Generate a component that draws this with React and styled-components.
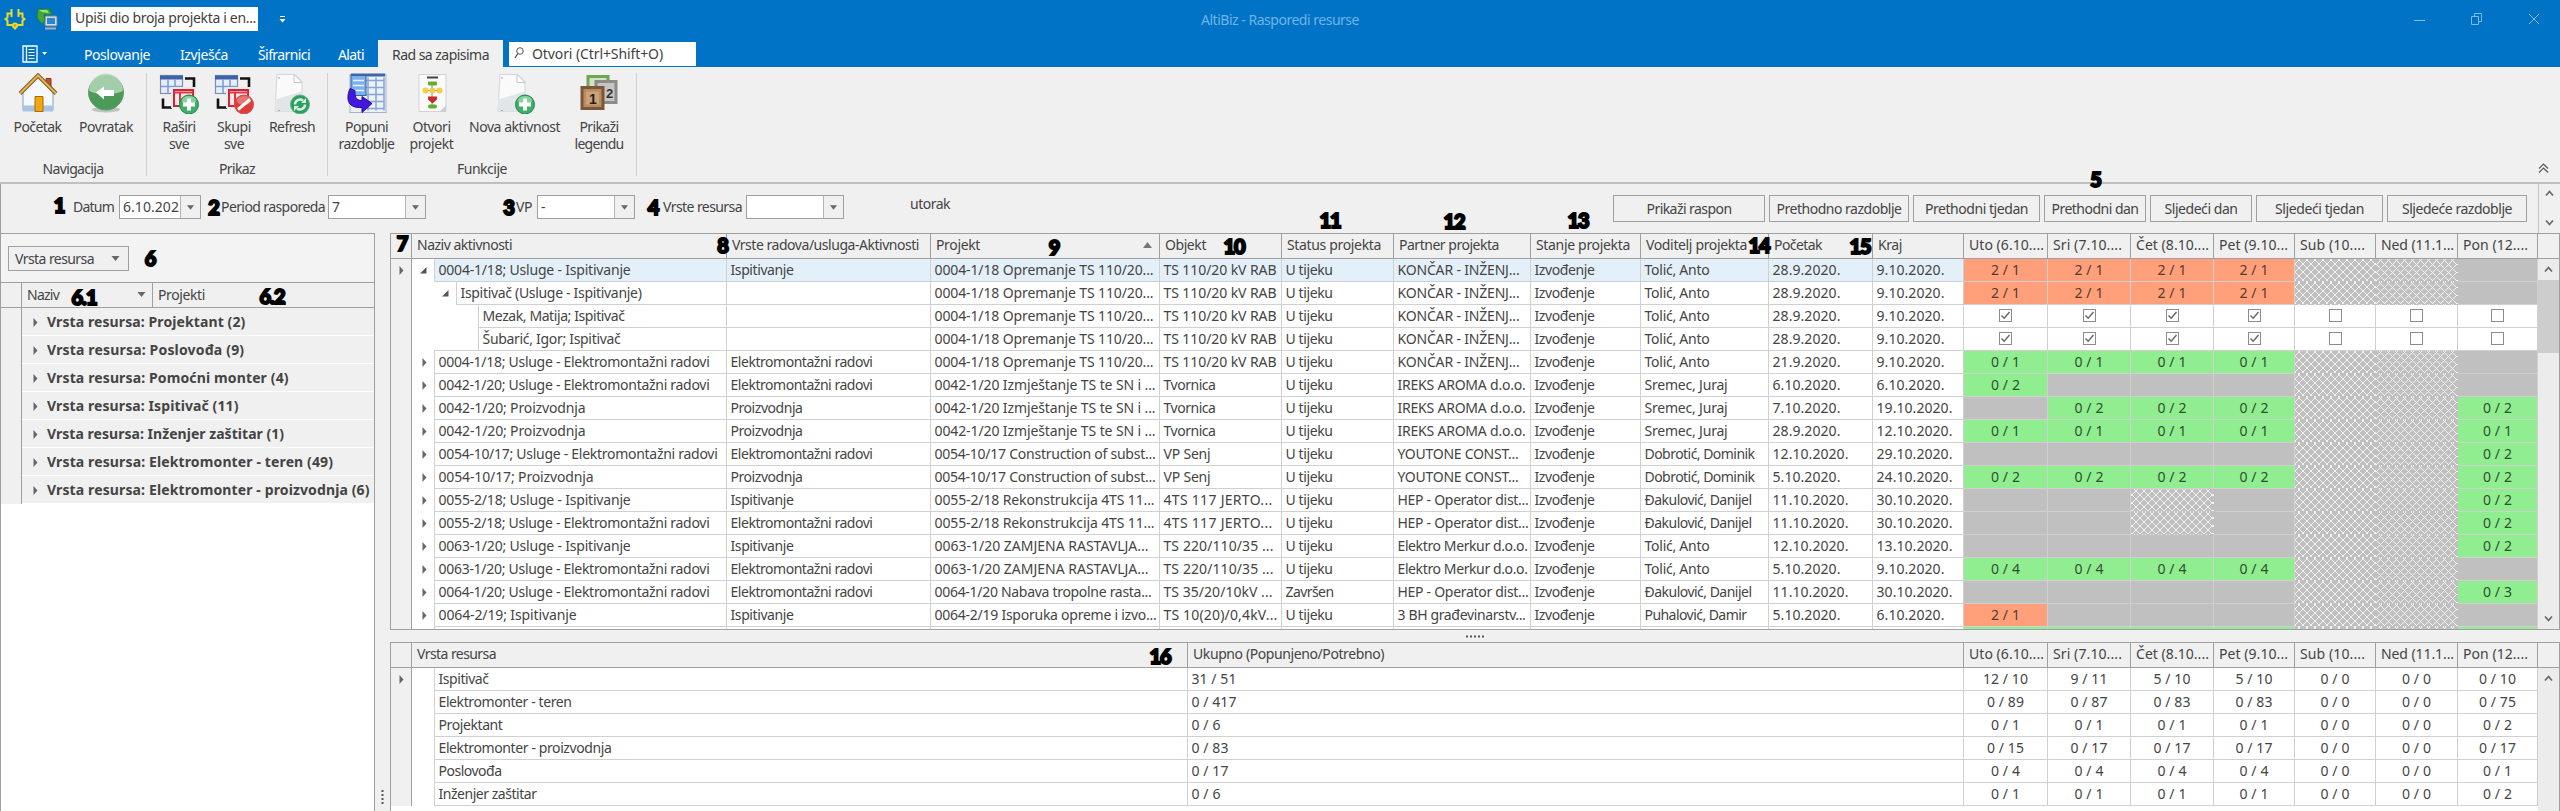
import React from "react";
import styled, { createGlobalStyle, css } from "styled-components";

const LINE = "#a0a0a0";
const SOFT = "#d0d0d0";
const FACE = "#f0f0f0";

const Global = createGlobalStyle`
  * { box-sizing: border-box; }
  html, body { margin: 0; padding: 0; background: ${FACE}; }
  body { overflow: hidden; }
`;

/* ---------- text with compact interface metrics ---------- */

const ADVANCE = {
  " ": 0.313, "(": 0.383, ")": 0.383, "-": 0.363, ".": 0.303, ",": 0.303, "/": 0.382, ":": 0.354, ";": 0.354, "+": 0.728,
  A: 0.6, B: 0.589, C: 0.601, D: 0.678, E: 0.561, F: 0.521, G: 0.667, H: 0.675, I: 0.373, J: 0.417, K: 0.588, L: 0.498,
  M: 0.771, N: 0.667, O: 0.708, P: 0.551, Q: 0.708, R: 0.621, S: 0.557, T: 0.584, U: 0.656, V: 0.597, W: 0.902, X: 0.581,
  Y: 0.576, Z: 0.559, a: 0.525, b: 0.553, c: 0.461, d: 0.553, e: 0.526, f: 0.318, g: 0.553, h: 0.558, i: 0.229, j: 0.282,
  k: 0.498, l: 0.229, m: 0.84, n: 0.558, o: 0.543, p: 0.553, q: 0.553, r: 0.36, s: 0.446, t: 0.334, u: 0.558, v: 0.498,
  w: 0.742, x: 0.495, y: 0.498, z: 0.444, "đ": 0.553, "Đ": 0.678,
};
const FAMILY = '"Noto Sans", "Open Sans", sans-serif';
const ruler = document.createElement("canvas").getContext("2d");

function tracking(text, bold) {
  let target = 0;
  for (const ch of text) {
    const base = ADVANCE[ch] ? ch : ch.normalize("NFD")[0];
    target += Math.round((ADVANCE[base] || 0.546) * 14);
  }
  if (bold) target *= 1.14;
  ruler.font = `${bold ? 700 : 400} 14px "Noto Sans"`;
  return (target - ruler.measureText(text).width) / text.length;
}

const Run = styled.span`
  white-space: pre;
  font-weight: ${(p) => (p.$bold ? 700 : 400)};
`;
const Txt = ({ children, bold }) => (
  <Run $bold={bold} style={{ letterSpacing: `${tracking(children, bold).toFixed(3)}px` }}>{children}</Run>
);

/* ---------- frame ---------- */

const Window = styled.div`
  position: relative;
  width: 2560px;
  height: 811px;
  overflow: hidden;
  display: flex;
  flex-direction: column;
  background: ${FACE};
  color: #444;
  font: 14px/18px ${FAMILY};
  svg { display: block; flex: none; }
`;

const TitleBar = styled.header`
  height: 40px;
  flex: none;
  background: #0173c7;
  display: flex;
  align-items: center;
  padding: 0 20px 2px 4px;
  color: #6fb4e6;
`;
const QuickBox = styled.div`
  width: 187px;
  height: 24px;
  margin: 0 21px 0 13px;
  padding: 2px 4px;
  background: #fff;
  color: #3f3f3f;
`;
const WindowTitle = styled.div`
  margin: 2px auto 0 915px;
`;
const WindowButtons = styled.div`
  display: flex;
  align-items: center;
  gap: 45px;
`;

const TabBar = styled.nav`
  height: 27px;
  flex: none;
  background: #0173c7;
  display: flex;
  align-items: stretch;
  color: #fff;
`;
const FileTab = styled.div`
  width: 70px;
  padding: 5px 0 0 22px;
  display: flex;
  gap: 4px;
`;
const Tab = styled.div`
  width: ${(p) => p.$w}px;
  padding-top: 6px;
  text-align: center;
  ${(p) => p.$active && css`background: ${FACE}; color: #3f3f3f;`}
`;
const SearchBox = styled.div`
  width: 187px;
  height: 24px;
  margin: 2px 0 0 6px;
  padding: 3px 5px;
  background: #fff;
  color: #3f3f3f;
  display: flex;
  gap: 8px;
`;

const Ribbon = styled.section`
  height: 117px;
  flex: none;
  display: flex;
  padding: 6px 0 0;
  border-bottom: 2px solid #bfbfbf;
`;
const Group = styled.div`
  width: ${(p) => p.$w}px;
  height: 103px;
  display: flex;
  flex-direction: column;
  align-items: center;
  border-right: 1px solid ${SOFT};
`;
const Tools = styled.div`
  height: 88px;
  display: flex;
  justify-content: center;
`;
const Tool = styled.div`
  width: ${(p) => p.$w}px;
  display: flex;
  flex-direction: column;
  align-items: center;
  line-height: 17px;
  & > svg { margin-bottom: 4px; }
`;
const Caption = styled.div`
  height: 18px;
  padding-top: 1px;
  line-height: 20px;
  flex: none;
`;
const Collapse = styled.div`
  margin: 90px 11px 0 auto;
`;

/* ---------- filter bar ---------- */

const FilterBar = styled.section`
  height: 49px;
  flex: none;
  display: flex;
  border-left: 1px solid ${LINE};
  padding-left: 72px;
`;
const Field = styled.label`
  display: flex;
  height: 24px;
  margin: 11px ${(p) => p.$after}px 0 0;
`;
const FieldLabel = styled.span`
  width: ${(p) => p.$w}px;
  padding-top: 3px;
`;
const Combo = styled.span`
  width: ${(p) => p.$w}px;
  display: flex;
  justify-content: space-between;
  border: 1px solid ${LINE};
  background: #fff;
`;
const ComboText = styled.span`
  flex: 1;
  min-width: 0;
  overflow: hidden;
  padding: 2px 0 0 3px;
`;
const ComboArrow = styled.span`
  width: 20px;
  flex: none;
  display: grid;
  place-items: center;
  border-left: 1px solid #b5b5b5;
  background: ${FACE};
`;
const DayName = styled.div`
  padding-top: 11px;
`;
const NavButtons = styled.div`
  display: flex;
  gap: 4px;
  margin: 11px 11px 0 auto;
`;
const NavButton = styled.div`
  width: ${(p) => p.$w}px;
  height: 27px;
  border: 1px solid ${LINE};
  text-align: center;
  line-height: 26px;
`;
const MiniScroll = styled.div`
  width: 22px;
  border-left: 1px solid #c4c4c4;
  display: flex;
  flex-direction: column;
  justify-content: space-between;
  align-items: center;
  padding: 6px 0 7px;
`;

/* ---------- workspace ---------- */

const Workspace = styled.main`
  flex: 1;
  min-height: 0;
  display: flex;
`;
const Side = styled.aside`
  width: 375px;
  flex: none;
  border: 1px solid ${LINE};
  border-bottom: 0;
  background: #fff;
`;
const SideTop = styled.div`
  height: 48px;
  padding: 12px 7px;
  background: #f3f3f3;
`;
const GroupBy = styled.div`
  width: 121px;
  height: 25px;
  border: 1px solid ${LINE};
  background: ${FACE};
  display: flex;
  align-items: center;
  justify-content: space-between;
  padding: 0 8px 0 6px;
`;
const SideHead = styled.div`
  height: 26px;
  display: grid;
  grid-template-columns: 21px 131px 1fr;
  border: solid ${LINE};
  border-width: 1px 0;
  background: ${FACE};
`;
const SideHeadCell = styled.div`
  display: flex;
  align-items: center;
  justify-content: space-between;
  padding: 0 6px 1px 5px;
  border-right: 1px solid ${LINE};
  &:last-child { border-right: 0; }
`;
const SideRow = styled.div`
  height: 28px;
  display: grid;
  grid-template-columns: 21px 1fr;
  background: ${FACE};
`;
const Gutter = styled.div`
  border-right: 1px solid ${LINE};
`;
const SideGroup = styled.div`
  display: flex;
  align-items: center;
  gap: 9px;
  padding: 1px 0 0 11px;
  border-bottom: 1px solid #fff;
`;
const VSplitter = styled.div`
  width: 15px;
  flex: none;
  display: flex;
  flex-direction: column;
  justify-content: flex-end;
  align-items: center;
  padding-bottom: 7px;
`;
const Grids = styled.div`
  flex: 1;
  min-width: 0;
  display: flex;
  flex-direction: column;
`;
const HSplitter = styled.div`
  height: 12px;
  flex: none;
  display: grid;
  place-items: center;
`;

const GridBox = styled.section`
  ${(p) => (p.$h ? css`height: ${p.$h}px; border-bottom: 1px solid ${LINE};` : css`flex: 1;`)}
  min-height: 0;
  overflow: hidden;
  border-top: 1px solid ${LINE};
  border-left: 1px solid ${LINE};
  background: #fff;
  display: flex;
`;
const GridTable = styled.div`
  width: 2147px;
  flex: none;
`;
const GridRow = styled.div`
  display: grid;
  grid-template-columns: ${(p) => p.$cols};
  height: ${(p) => (p.$head ? 25 : 23)}px;
  ${(p) => p.$head && css`background: ${FACE}; border-bottom: 1px solid ${LINE};`}
`;
const HeadCell = styled.div`
  display: flex;
  align-items: center;
  justify-content: space-between;
  overflow: hidden;
  padding: 0 7px 2px 5px;
  border-right: 1px solid ${LINE};
`;
const Marker = styled.div`
  display: grid;
  place-items: center;
  background: ${FACE};
  border-right: 1px solid ${LINE};
`;
const Cell = styled.div`
  overflow: hidden;
  padding: 2px 0 0 3.5px;
  border-right: 1px solid ${SOFT};
  border-bottom: 1px solid ${SOFT};
  background: ${(p) => (p.$selected ? "#e4f0f9" : "#fff")};
`;
const TreeCell = styled.div`
  display: flex;
  min-width: 0;
`;
const Twig = styled.div`
  width: ${(p) => 22 + p.$level * 22}px;
  flex: none;
  display: flex;
  align-items: center;
  justify-content: flex-end;
  padding-right: 7px;
  ${(p) => p.$closing && css`background: linear-gradient(${SOFT}, ${SOFT}) 22px 100% / 100% 1px no-repeat;`}
`;
const TreeText = styled(Cell)`
  flex: 1;
  border-left: 1px solid ${SOFT};
`;

const hatch = css`
  background:
    repeating-linear-gradient(45deg, rgba(255,255,255,.8) 0 1.2px, transparent 1.2px 5.657px),
    repeating-linear-gradient(-45deg, rgba(255,255,255,.8) 0 1.2px, transparent 1.2px 5.657px),
    #c0c0c0;
  border-color: transparent;
`;
const fills = {
  o: css`background: #ffa07a; color: #5a3a2e;`,
  g: css`background: #90ee90; color: #2f4f2f;`,
  x: css`background: #c0c0c0;`,
  h: hatch,
  w: css`background: #fff;`,
};
const DayCell = styled.div`
  display: flex;
  justify-content: center;
  align-items: center;
  padding-bottom: 1px;
  border-right: 1px solid ${SOFT};
  border-bottom: 1px solid ${SOFT};
  ${(p) => fills[p.$fill]}
`;
const Check = styled.span`
  width: 13px;
  height: 13px;
  border: 1px solid #8c8c8c;
  background: #fff;
  display: grid;
  place-items: center;
`;

const ScrollColumn = styled.div`
  flex: 1;
  display: flex;
  flex-direction: column;
  align-items: center;
  background: #ececec;
  border-right: 1px solid ${LINE};
`;
const ScrollHead = styled.div`
  align-self: stretch;
  height: 25px;
  flex: none;
  background: ${FACE};
  border-bottom: 1px solid ${LINE};
`;
const ScrollArrow = styled.div`
  height: 21px;
  flex: none;
  display: grid;
  place-items: center;
`;
const Thumb = styled.div`
  align-self: stretch;
  height: 73px;
  background: #cdcdcd;
  margin-bottom: auto;
`;

/* numbered callouts drawn over the window */
const Callout = styled.b`
  position: absolute;
  left: ${(p) => p.$x}px;
  top: ${(p) => p.$y}px;
  transform: translate(-50%, -50%);
  font: 900 20px/20px Lato, "Open Sans", sans-serif;
  letter-spacing: -1px;
  color: #000;
  -webkit-text-stroke: 2px #000;
`;

/* ---------- small glyphs ---------- */

const Down = ({ w = 8, color = "#666" }) => (
  <svg width={w} height="5" viewBox="0 0 8 5"><path d="M0 0h8L4 5z" fill={color} /></svg>
);
const Up = () => <svg width="9" height="6" viewBox="0 0 9 6"><path d="M0 6h9L4.500 0z" fill="#777" /></svg>;
const Right = () => <svg width="5" height="9" viewBox="0 0 5 9"><path d="M.5 0L4.500 4.500.5 9z" fill="#666" /></svg>;
const Open = () => <svg width="7" height="7" viewBox="0 0 7 7"><path d="M6.500 0v6.500H0z" fill="#555" /></svg>;
const Chevron = ({ down }) => (
  <svg width="9" height="7" viewBox="0 0 9 7">
    <path d={down ? "M1 1.500L4.500 5.500 8 1.500" : "M1 5.500L4.500 1.500 8 5.500"} fill="none" stroke="#6a6a6a" strokeWidth="1.800" />
  </svg>
);
const Tick = () => (
  <svg width="11" height="11" viewBox="0 0 11 11"><path d="M1.500 5.500L4.200 8.300 9.500 2" fill="none" stroke="#666" strokeWidth="1.400" /></svg>
);
const DotsH = () => <svg width="18" height="3"><path d="M0 1.500h18" stroke="#555" strokeWidth="2" strokeDasharray="2 2" /></svg>;
const DotsV = () => <svg width="3" height="14"><path d="M1.500 0v14" stroke="#555" strokeWidth="2" strokeDasharray="2 2" /></svg>;

const Logo = () => (
  <svg width="22" height="22" viewBox="0 0 22 22" fill="none" stroke="#e6dc2c" strokeWidth="2">
    <path d="M7.500 5.500H3.500V9.500L1.500 11l2 1.500V17h5M14.500 5.500h4V9.500l2 1.500-2 1.500V17h-5M7.500 1v8M14.500 1v8" />
    <circle cx="11" cy="17.500" r="2.200" fill="#b5ad10" strokeWidth="1.800" />
    <path d="M11 19.500v2" />
  </svg>
);
const Exchange = () => (
  <svg width="22" height="22" viewBox="0 0 22 22">
    <rect x="9" y="8" width="12" height="10" rx="1" fill="#c9dce9" stroke="#74818c" />
    <rect x="11" y="10" width="8" height="6" fill="#2c86cf" />
    <path d="M9 20.500h11" stroke="#a9b0b5" strokeWidth="2" />
    <path d="M2 1h11l3 5-4 1-4-1 1 6-3 4-5-6z" fill="#43a638" stroke="#237a25" strokeWidth=".8" />
    <path d="M3 2h8l2 3-7-1z" fill="#9ae082" />
  </svg>
);

const Plus = () => (
  <g>
    <circle cx="30" cy="31" r="9.500" fill="#3fae68" stroke="#22864a" />
    <ellipse cx="30" cy="27" rx="7" ry="4.500" fill="#a5dfb6" opacity=".7" />
    <path d="M28 25h4v4h4v4h-4v4h-4v-4h-4v-4h4z" fill="#fff" />
  </g>
);
const Page = () => (
  <g>
    <path d="M5 1h18l7 7v30H3z" fill="#fafafa" stroke="#d3d6da" />
    <path d="M3 26l27-8v20H3z" fill="#e3e6e9" />
    <path d="M22 1v8h8z" fill="#fff" stroke="#c3c7cc" />
    <path d="M6 4.500h2M6 37h2" stroke="#9aa" />
  </g>
);
const Tables = () => (
  <g>
    <path d="M26 5h9v10M4 25v9h9" fill="none" stroke="#111" strokeWidth="2.600" />
    <rect x="1.500" y="2" width="22" height="18" fill="#e6eefb" stroke="#7f90ad" strokeWidth="1.200" />
    <path d="M1 4h23" stroke="#3d63a8" strokeWidth="4" />
    <path d="M9 6v14M16 6v7M2 13h21" stroke="#7b9bd4" strokeWidth="1.500" />
    <rect x="14" y="15.500" width="21" height="17" fill="#fbe9ea" stroke="#e8e8e8" strokeWidth="4" />
    <rect x="15" y="16.500" width="19" height="16" fill="#fbe9ea" stroke="#cf2637" strokeWidth="2" />
    <path d="M15 19h19M21 19v12" stroke="#dd3849" strokeWidth="2" />
  </g>
);
const icons = {
  home: (
    <g>
      <path d="M28 5h5v12h-5z" fill="#c4502c" stroke="#8c3420" />
      <path d="M5 18L20 3l15 15v19H5z" fill="#f5f8fd" stroke="#8aa0bd" />
      <path d="M5 32h30v6H5z" fill="#a9c4e5" />
      <path d="M2 20L20 2l18 18" fill="none" stroke="#80561a" strokeWidth="4" />
      <path d="M2 20L20 2l18 18" fill="none" stroke="#e3b759" strokeWidth="2" />
      <path d="M17 23h8v15h-8z" fill="#f2a70c" stroke="#a66a0a" />
    </g>
  ),
  back: (
    <g>
      <ellipse cx="20" cy="36" rx="14" ry="3" fill="#bcc6bc" />
      <circle cx="20" cy="19" r="17.500" fill="#4b9a58" stroke="#5f9e69" />
      <path d="M3 17a17 17 0 0134 0c-6 5-28 5-34 0z" fill="#c0dfc4" opacity=".75" />
      <path d="M10 19l8-6v3.500h10v6H18V26z" fill="#fff" />
    </g>
  ),
  expand: <g><Tables /><Plus /></g>,
  shrink: (
    <g>
      <Tables />
      <circle cx="30" cy="31" r="9.500" fill="#df3c38" stroke="#d05050" />
      <ellipse cx="30" cy="27" rx="7" ry="4.500" fill="#f39a92" opacity=".6" />
      <path d="M24 36l12-10" stroke="#fff" strokeWidth="3" />
    </g>
  ),
  refresh: (
    <g>
      <Page />
      <circle cx="28" cy="31" r="9.500" fill="#2f9d62" stroke="#5cb585" />
      <path d="M23 31a5 5 0 018-4M33 31a5 5 0 01-8 4" fill="none" stroke="#d5f5dc" strokeWidth="2.500" />
      <path d="M29 29.500h5v-5zM27 32.500h-5v5z" fill="#d5f5dc" />
    </g>
  ),
  fill: (
    <g>
      <rect x="3" y="1" width="36" height="38" fill="#e9f1fb" stroke="#a5b2c8" />
      <path d="M4 1.500h34" stroke="#3f66a5" strokeWidth="3" />
      <path d="M18 7h19M18 14h19M18 21h19M18 28h19M18 35h19M21 4v33M29 4v33M37 4v33" stroke="#8aa3cf" strokeWidth="1.500" />
      <rect x="4" y="2" width="15" height="20" fill="#7cb0ea" stroke="#36669f" />
      <path d="M6 7h11M6 12h11M6 17h11" stroke="#e8f3ff" strokeWidth="1.500" />
      <path d="M3 15c-5 12-1 20 12 19v5l10-9-10-7v4C8 27 8 22 8 17z" fill="#4318dd" stroke="#2a0a9c" />
    </g>
  ),
  project: (
    <g>
      <path d="M7 1h27v37H7z" fill="#fafafa" stroke="#d1d3d4" />
      <path d="M28 38l6-6v6z" fill="#c9ccce" />
      <path d="M15 4h11" stroke="#444" strokeWidth="2" />
      <path d="M20 10v23M13 17h15" stroke="#888" />
      <rect x="16" y="8" width="9" height="4" rx="1" fill="#65ad30" />
      <circle cx="13.500" cy="17" r="3" fill="#f1cf48" /><circle cx="20.500" cy="17" r="3" fill="#f1cf48" /><circle cx="27.500" cy="17" r="3" fill="#f1cf48" />
      <path d="M16 23h9v3l-4.500 4-4.500-4z" fill="#cc2a28" />
      <rect x="16" y="31" width="9" height="4" rx="2" fill="#65ad30" />
    </g>
  ),
  add: <g><Page /><Plus /></g>,
  legend: (
    <g>
      <path d="M9 3h20v20H9z" fill="#cde5c1" stroke="#6fa558" strokeWidth="3" />
      <path d="M17 8h20v21H17z" fill="#c5c5c1" stroke="#8c8c87" strokeWidth="3" />
      <path d="M3 14h21v21H3z" fill="#b98b60" stroke="#7b5638" strokeWidth="3" />
      <path d="M7 18h13v13H7z" fill="#cda27a" />
      <text x="10" y="30" fontFamily="Liberation Sans" fontSize="14" fontWeight="700" fill="#222">1</text>
      <text x="27" y="24" fontFamily="Liberation Sans" fontSize="13" fontWeight="700" fill="#333">2</text>
    </g>
  ),
};
const ToolButton = ({ icon, w, lines }) => (
  <Tool $w={w}>
    <svg width="40" height="41" viewBox="0 0 40 40">{icons[icon]}</svg>
    {lines.map((l) => <Txt key={l}>{l}</Txt>)}
  </Tool>
);

/* ---------- data ---------- */

const groups = [
  { name: "Navigacija", w: 147, tools: [["home", 66, ["Početak"]], ["back", 71, ["Povratak"]]] },
  { name: "Prikaz", w: 181, tools: [["expand", 56, ["Raširi", "sve"]], ["shrink", 54, ["Skupi", "sve"]], ["refresh", 62, ["Refresh"]]] },
  { name: "Funkcije", w: 309, tools: [["fill", 68, ["Popuni", "razdoblje"]], ["project", 62, ["Otvori", "projekt"]], ["add", 104, ["Nova aktivnost"]], ["legend", 65, ["Prikaži", "legendu"]]] },
];
const navButtons = [["Prikaži raspon", 152], ["Prethodno razdoblje", 140], ["Prethodni tjedan", 127], ["Prethodni dan", 102], ["Sljedeći dan", 102], ["Sljedeći tjedan", 127], ["Sljedeće razdoblje", 140]];
const resources = ["Projektant (2)", "Poslovođa (9)", "Pomoćni monter (4)", "Ispitivač (11)", "Inženjer zaštitar (1)", "Elektromonter - teren (49)", "Elektromonter - proizvodnja (6)"];

const days = ["Uto (6.10....", "Sri (7.10....", "Čet (8.10....", "Pet (9.10...", "Sub (10....", "Ned (11.1...", "Pon (12...."];
const DAY_COLS = "84px 83px 83px 81px 81px 82px 80px";
const MAIN_COLS = `21px 315px 204px 229px 122px 112px 137px 110px 128px 104px 91px ${DAY_COLS}`;
const SUM_COLS = `21px 776px 776px ${DAY_COLS}`;
const mainHead = ["Naziv aktivnosti", "Vrste radova/usluga-Aktivnosti", "Projekt", "Objekt", "Status projekta", "Partner projekta", "Stanje projekta", "Voditelj projekta", "Početak", "Kraj"];

const P1 = "0004-1/18 Opremanje TS 110/20...";
const P2 = "0042-1/20 Izmještanje TS te SN i ...";
const P3 = "0054-10/17 Construction of subst...";
const P4 = "0055-2/18 Rekonstrukcija 4TS 11...";
const P5 = "0063-1/20 ZAMJENA RASTAVLJA...";
const EL = "Elektromontažni radovi";
const RAB = "TS 110/20 kV RAB";
const KON = "KONČAR - INŽENJ...";
const HEP = "HEP - Operator dist...";
const U = "U tijeku";
/* level, name, kind, project, object, status, partner, lead, start, end, days */
const rows = [
  [0, "0004-1/18; Usluge - Ispitivanje", "Ispitivanje", P1, RAB, U, KON, "Tolić, Anto", "28.9.2020.", "9.10.2020.", "o2/1 o2/1 o2/1 o2/1 h h x"],
  [1, "Ispitivač (Usluge - Ispitivanje)", "", P1, RAB, U, KON, "Tolić, Anto", "28.9.2020.", "9.10.2020.", "o2/1 o2/1 o2/1 o2/1 h h x"],
  [2, "Mezak, Matija; Ispitivač", "", P1, RAB, U, KON, "Tolić, Anto", "28.9.2020.", "9.10.2020.", "w+ w+ w+ w+ w- w- w-"],
  [2, "Šubarić, Igor; Ispitivač", "", P1, RAB, U, KON, "Tolić, Anto", "28.9.2020.", "9.10.2020.", "w+ w+ w+ w+ w- w- w-"],
  [0, "0004-1/18; Usluge - Elektromontažni radovi", EL, P1, RAB, U, KON, "Tolić, Anto", "21.9.2020.", "9.10.2020.", "g0/1 g0/1 g0/1 g0/1 h h x"],
  [0, "0042-1/20; Usluge - Elektromontažni radovi", EL, P2, "Tvornica", U, "IREKS AROMA d.o.o.", "Sremec, Juraj", "6.10.2020.", "6.10.2020.", "g0/2 x x x h h x"],
  [0, "0042-1/20; Proizvodnja", "Proizvodnja", P2, "Tvornica", U, "IREKS AROMA d.o.o.", "Sremec, Juraj", "7.10.2020.", "19.10.2020.", "x g0/2 g0/2 g0/2 h h g0/2"],
  [0, "0042-1/20; Proizvodnja", "Proizvodnja", P2, "Tvornica", U, "IREKS AROMA d.o.o.", "Sremec, Juraj", "28.9.2020.", "12.10.2020.", "g0/1 g0/1 g0/1 g0/1 h h g0/1"],
  [0, "0054-10/17; Usluge - Elektromontažni radovi", EL, P3, "VP Senj", U, "YOUTONE CONST...", "Dobrotić, Dominik", "12.10.2020.", "29.10.2020.", "x x x x h h g0/2"],
  [0, "0054-10/17; Proizvodnja", "Proizvodnja", P3, "VP Senj", U, "YOUTONE CONST...", "Dobrotić, Dominik", "5.10.2020.", "24.10.2020.", "g0/2 g0/2 g0/2 g0/2 h h g0/2"],
  [0, "0055-2/18; Usluge - Ispitivanje", "Ispitivanje", P4, "4TS 117 JERTO...", U, HEP, "Đakulović, Danijel", "11.10.2020.", "30.10.2020.", "x x h x h h g0/2"],
  [0, "0055-2/18; Usluge - Elektromontažni radovi", EL, P4, "4TS 117 JERTO...", U, HEP, "Đakulović, Danijel", "11.10.2020.", "30.10.2020.", "x x h x h h g0/2"],
  [0, "0063-1/20; Usluge - Ispitivanje", "Ispitivanje", P5, "TS 220/110/35 ...", U, "Elektro Merkur d.o.o.", "Tolić, Anto", "12.10.2020.", "13.10.2020.", "x x x x h h g0/2"],
  [0, "0063-1/20; Usluge - Elektromontažni radovi", EL, P5, "TS 220/110/35 ...", U, "Elektro Merkur d.o.o.", "Tolić, Anto", "5.10.2020.", "9.10.2020.", "g0/4 g0/4 g0/4 g0/4 h h x"],
  [0, "0064-1/20; Usluge - Elektromontažni radovi", EL, "0064-1/20 Nabava tropolne rasta...", "TS 35/20/10kV ...", "Završen", HEP, "Đakulović, Danijel", "11.10.2020.", "30.10.2020.", "x x x x h h g0/3"],
  [0, "0064-2/19; Ispitivanje", "Ispitivanje", "0064-2/19 Isporuka opreme i izvo...", "TS 10(20)/0,4kV...", U, "3 BH građevinarstv...", "Puhalović, Damir", "5.10.2020.", "6.10.2020.", "o2/1 x x x h h x"],
];
const totals = [
  ["Ispitivač", "31/51", "12/10 9/11 5/10 5/10 0/0 0/0 0/10"],
  ["Elektromonter - teren", "0/417", "0/89 0/87 0/83 0/83 0/0 0/0 0/75"],
  ["Projektant", "0/6", "0/1 0/1 0/1 0/1 0/0 0/0 0/2"],
  ["Elektromonter - proizvodnja", "0/83", "0/15 0/17 0/17 0/17 0/0 0/0 0/17"],
  ["Poslovođa", "0/17", "0/4 0/4 0/4 0/4 0/0 0/0 0/1"],
  ["Inženjer zaštitar", "0/6", "0/1 0/1 0/1 0/1 0/0 0/0 0/2"],
];
const callouts = [
  ["1", 59, 205], ["2", 213.5, 207], ["3", 508.5, 207], ["4", 653, 207], ["5", 2095.5, 179], ["6", 150, 258], ["7", 402, 243],
  ["8", 722.5, 245], ["9", 1054, 247], ["10", 1234, 246], ["11", 1330, 220], ["12", 1454, 220.5], ["13", 1578, 220],
  ["14", 1759, 245], ["15", 1860, 246], ["16", 1160, 656], ["6.1", 84, 297], ["6.2", 272, 296],
];

const ratio = (v) => v.replace("/", " / ");

const FilterField = ({ label, labelWidth, value, width, after }) => (
  <Field $after={after}>
    <FieldLabel $w={labelWidth}><Txt>{label}</Txt></FieldLabel>
    <Combo $w={width}>
      <ComboText>{value && <Txt>{value}</Txt>}</ComboText>
      <ComboArrow><Down w={7} /></ComboArrow>
    </Combo>
  </Field>
);

const Day = ({ code }) => {
  const value = code.slice(1);
  return (
    <DayCell $fill={code[0]}>
      {code[0] === "w" ? <Check>{value === "+" && <Tick />}</Check> : value && <Txt>{ratio(value)}</Txt>}
    </DayCell>
  );
};

const ActivityRow = ({ row, first, closing }) => {
  const [level, name, kind, project, object, status, partner, lead, start, end, plan] = row;
  return (
    <GridRow $cols={MAIN_COLS}>
      <Marker>{first && <Right />}</Marker>
      <TreeCell>
        <Twig $level={level} $closing={closing}>{level === 1 || first ? <Open /> : level === 0 && <Right />}</Twig>
        <TreeText $selected={first}><Txt>{name}</Txt></TreeText>
      </TreeCell>
      {[kind, project, object, status, partner, "Izvođenje", lead, start, end].map((t, i) => (
        <Cell key={i} $selected={first}>{t && <Txt>{t}</Txt>}</Cell>
      ))}
      {plan.split(" ").map((c, i) => <Day key={i} code={c} />)}
    </GridRow>
  );
};

export default function App() {
  return (
    <Window>
      <Global />
      <TitleBar>
        <Logo />
        <svg width="10" height="1" />
        <Exchange />
        <QuickBox><Txt>Upiši dio broja projekta i en...</Txt></QuickBox>
        <svg width="7" height="7" viewBox="0 0 7 7"><path d="M1 .5h5" stroke="#fff" /><path d="M.5 3h6l-3 3.500z" fill="#fff" /></svg>
        <WindowTitle><Txt>AltiBiz - Rasporedi resurse</Txt></WindowTitle>
        <WindowButtons>
          <svg width="12" height="12"><path d="M0 7.500h11" stroke="#7abcec" /></svg>
          <svg width="12" height="12" fill="none" stroke="#7abcec"><path d="M.5 3.500h7v8h-7zM3.500 3V.5h7v8H8" /></svg>
          <svg width="12" height="12" stroke="#7abcec"><path d="M1 1l10 10M11 1L1 11" /></svg>
        </WindowButtons>
      </TitleBar>
      <TabBar>
        <FileTab>
          <svg width="16" height="18" viewBox="0 0 16 18" stroke="#fff"><path d="M1 1h14v16H1zM4.500 1v16" fill="none" strokeWidth="1.300" /><path d="M6.500 4.500h6M6.500 7.500h6M6.500 10.500h6M6.500 13.500h6" /></svg>
          <svg width="5" height="18"><path d="M0 7h5L2.500 10z" fill="#fff" /></svg>
        </FileTab>
        <Tab $w={94}><Txt>Poslovanje</Txt></Tab>
        <Tab $w={80}><Txt>Izvješća</Txt></Tab>
        <Tab $w={80}><Txt>Šifrarnici</Txt></Tab>
        <Tab $w={54}><Txt>Alati</Txt></Tab>
        <Tab $w={125} $active><Txt>Rad sa zapisima</Txt></Tab>
        <SearchBox>
          <svg width="10" height="17" viewBox="0 0 10 17" fill="none" stroke="#555"><circle cx="6" cy="6" r="3.300" /><path d="M3.800 8.500L1 13" strokeWidth="1.400" /></svg>
          <Txt>Otvori (Ctrl+Shift+O)</Txt>
        </SearchBox>
      </TabBar>
      <Ribbon>
        {groups.map((g) => (
          <Group key={g.name} $w={g.w}>
            <Tools>{g.tools.map(([icon, w, lines]) => <ToolButton key={icon} icon={icon} w={w} lines={lines} />)}</Tools>
            <Caption><Txt>{g.name}</Txt></Caption>
          </Group>
        ))}
        <Collapse>
          <svg width="11" height="11" viewBox="0 0 11 11" fill="none" stroke="#555" strokeWidth="1.200"><path d="M1 5.500L5.500 1 10 5.500M1 9.500L5.500 5 10 9.500" /></svg>
        </Collapse>
      </Ribbon>

      <FilterBar>
        <FilterField label="Datum" labelWidth={46} value="6.10.202" width={82} after={20} />
        <FilterField label="Period rasporeda" labelWidth={107} value="7" width={98} after={90} />
        <FilterField label="VP" labelWidth={21} value="-" width={98} after={28} />
        <FilterField label="Vrste resursa" labelWidth={83} value="" width={98} after={66} />
        <DayName><Txt>utorak</Txt></DayName>
        <NavButtons>{navButtons.map(([t, w]) => <NavButton key={t} $w={w}><Txt>{t}</Txt></NavButton>)}</NavButtons>
        <MiniScroll><Chevron /><Chevron down /></MiniScroll>
      </FilterBar>

      <Workspace>
        <Side>
          <SideTop><GroupBy><Txt>Vrsta resursa</Txt><Down w={9} /></GroupBy></SideTop>
          <SideHead>
            <SideHeadCell />
            <SideHeadCell><Txt>Naziv</Txt><Down w={9} /></SideHeadCell>
            <SideHeadCell><Txt>Projekti</Txt></SideHeadCell>
          </SideHead>
          {resources.map((r) => (
            <SideRow key={r}>
              <Gutter />
              <SideGroup><Right /><Txt bold>{`Vrsta resursa: ${r}`}</Txt></SideGroup>
            </SideRow>
          ))}
        </Side>
        <VSplitter><DotsV /></VSplitter>
        <Grids>
          <GridBox $h={397}>
            <GridTable>
              <GridRow $head $cols={MAIN_COLS}>
                <HeadCell />
                {mainHead.map((h) => <HeadCell key={h}><Txt>{h}</Txt>{h === "Projekt" && <Up />}</HeadCell>)}
                {days.map((d) => <HeadCell key={d}><Txt>{d}</Txt></HeadCell>)}
              </GridRow>
              {rows.map((r, i) => <ActivityRow key={i} row={r} first={i === 0} closing={i === 3} />)}
              <GridRow $cols={MAIN_COLS}>
                <Marker />
                <TreeCell><Twig $level={0} /><TreeText /></TreeCell>
                {mainHead.slice(1).map((h) => <Cell key={h} />)}
                {["g", "g", "g", "g", "h", "h", "g"].map((c, i) => <Day key={i} code={c} />)}
              </GridRow>
            </GridTable>
            <ScrollColumn>
              <ScrollHead />
              <ScrollArrow><Chevron /></ScrollArrow>
              <Thumb />
              <ScrollArrow><Chevron down /></ScrollArrow>
            </ScrollColumn>
          </GridBox>
          <HSplitter><DotsH /></HSplitter>
          <GridBox>
            <GridTable>
              <GridRow $head $cols={SUM_COLS}>
                <HeadCell />
                <HeadCell><Txt>Vrsta resursa</Txt></HeadCell>
                <HeadCell><Txt>Ukupno (Popunjeno/Potrebno)</Txt></HeadCell>
                {days.map((d) => <HeadCell key={d}><Txt>{d}</Txt></HeadCell>)}
              </GridRow>
              {totals.map(([name, total, plan], i) => (
                <GridRow key={name} $cols={SUM_COLS}>
                  <Marker>{i === 0 && <Right />}</Marker>
                  <TreeCell><Twig $level={0} /><TreeText><Txt>{name}</Txt></TreeText></TreeCell>
                  <Cell><Txt>{ratio(total)}</Txt></Cell>
                  {plan.split(" ").map((v, k) => <Day key={k} code={`n${v}`} />)}
                </GridRow>
              ))}
            </GridTable>
            <ScrollColumn>
              <ScrollHead />
              <ScrollArrow><Chevron /></ScrollArrow>
            </ScrollColumn>
          </GridBox>
        </Grids>
      </Workspace>

      {callouts.map(([t, x, y]) => <Callout key={t} $x={x} $y={y}>{t}</Callout>)}
    </Window>
  );
}
